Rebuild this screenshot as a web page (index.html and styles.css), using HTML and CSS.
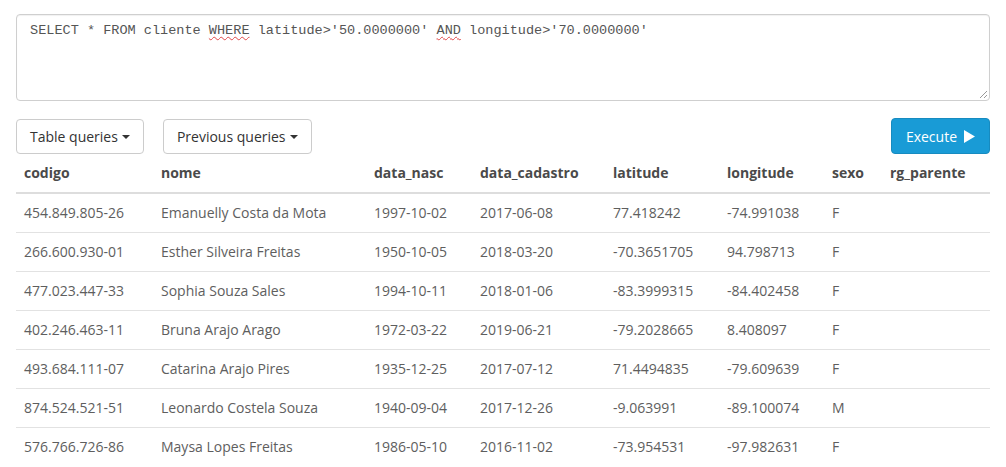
FILE: index.html
```html
<!DOCTYPE html>
<html>
<head>
<meta charset="utf-8">
<link rel="stylesheet" href="styles.css">
</head>
<body>
<div class="page">
  <div class="editor">
    <div class="code">SELECT * FROM cliente <span class="spell">WHERE</span> latitude&gt;'50.0000000' <span class="spell">AND</span> longitude&gt;'70.0000000'</div>
    <svg class="grip" width="10" height="10" viewBox="0 0 10 10"><path d="M9 2 L2 9 M9 6 L6 9" stroke="#999" stroke-width="1"/></svg>
  </div>
  <div class="toolbar">
    <div class="left">
      <button class="btn">Table queries <span class="caret"></span></button>
      <button class="btn">Previous queries <span class="caret"></span></button>
    </div>
    <button class="btn exec">Execute <svg width="12" height="13" viewBox="0 0 12 13"><path d="M1 0 L12 6.5 L1 13 Z" fill="#fff"/></svg></button>
  </div>
  <table class="grid">
    <colgroup>
      <col style="width:137px"><col style="width:213px"><col style="width:106px"><col style="width:133px"><col style="width:114px"><col style="width:105px"><col style="width:58px"><col style="width:108px">
    </colgroup>
    <thead>
      <tr><th>codigo</th><th>nome</th><th>data_nasc</th><th>data_cadastro</th><th>latitude</th><th>longitude</th><th>sexo</th><th>rg_parente</th></tr>
    </thead>
    <tbody>
      <tr><td>454.849.805-26</td><td>Emanuelly Costa da Mota</td><td>1997-10-02</td><td>2017-06-08</td><td>77.418242</td><td>-74.991038</td><td>F</td><td></td></tr>
      <tr><td>266.600.930-01</td><td>Esther Silveira Freitas</td><td>1950-10-05</td><td>2018-03-20</td><td>-70.3651705</td><td>94.798713</td><td>F</td><td></td></tr>
      <tr><td>477.023.447-33</td><td>Sophia Souza Sales</td><td>1994-10-11</td><td>2018-01-06</td><td>-83.3999315</td><td>-84.402458</td><td>F</td><td></td></tr>
      <tr><td>402.246.463-11</td><td>Bruna Arajo Arago</td><td>1972-03-22</td><td>2019-06-21</td><td>-79.2028665</td><td>8.408097</td><td>F</td><td></td></tr>
      <tr><td>493.684.111-07</td><td>Catarina Arajo Pires</td><td>1935-12-25</td><td>2017-07-12</td><td>71.4494835</td><td>-79.609639</td><td>F</td><td></td></tr>
      <tr><td>874.524.521-51</td><td>Leonardo Costela Souza</td><td>1940-09-04</td><td>2017-12-26</td><td>-9.063991</td><td>-89.100074</td><td>M</td><td></td></tr>
      <tr><td>576.766.726-86</td><td>Maysa Lopes Freitas</td><td>1986-05-10</td><td>2016-11-02</td><td>-73.954531</td><td>-97.982631</td><td>F</td><td></td></tr>
    </tbody>
  </table>
</div>
</body>
</html>
```
FILE: styles.css
```css
html, body {
  margin: 0;
  padding: 0;
  background: #fff;
}
body {
  font-family: "Open Sans", "Liberation Sans", sans-serif;
  font-size: 14px;
  color: #5e5e5e;
}
.page {
  padding: 14px 16px 0 16px;
}
.editor {
  position: relative;
  height: 87px;
  box-sizing: border-box;
  border: 1px solid #cfcfcf;
  border-radius: 4px;
  padding: 6px 13px;
  box-shadow: inset 0 1px 1px rgba(0,0,0,0.06);
}
.code {
  font-family: "Liberation Mono", "DejaVu Sans Mono", monospace;
  font-size: 13.55px;
  line-height: 20px;
  color: #555;
  white-space: pre;
}
.spell {
  text-decoration: underline wavy #e04848;
  text-decoration-thickness: 1px;
  text-underline-offset: 2px;
}
.grip {
  position: absolute;
  right: 1px;
  bottom: 1px;
}
.toolbar {
  display: flex;
  justify-content: space-between;
  align-items: flex-start;
  margin-top: 17px;
  height: 37px;
}
.left {
  display: flex;
  gap: 19px;
  padding-top: 1px;
}
.btn {
  font-family: "Open Sans", "Liberation Sans", sans-serif;
  font-size: 14px;
  color: #333;
  background: #fff;
  border: 1px solid #ccc;
  border-radius: 4px;
  height: 35px;
  padding: 0 13px 0 13px;
  display: flex;
  align-items: center;
  gap: 4px;
  cursor: pointer;
}
.caret {
  display: inline-block;
  width: 0;
  height: 0;
  border-top: 4px solid #333;
  border-left: 4px solid transparent;
  border-right: 4px solid transparent;
  margin-left: 0;
}
.exec {
  background: #199bd6;
  border-color: #178bc0;
  color: #fff;
  padding: 0 14px 0 14px;
  gap: 6px;
  height: 36px;
}
.grid {
  width: 974px;
  border-collapse: collapse;
  table-layout: fixed;
}
.grid th {
  text-align: left;
  font-weight: 700;
  color: #4a4a4a;
  padding: 8px 8px 9px 8px;
  line-height: 20px;
  border-bottom: 2px solid #ddd;
  white-space: nowrap;
}
.grid td {
  padding: 9px 8px;
  line-height: 20px;
  border-top: 1px solid #e2e2e2;
  white-space: nowrap;
}
.grid tbody tr:first-child td {
  border-top: 0;
}
```
